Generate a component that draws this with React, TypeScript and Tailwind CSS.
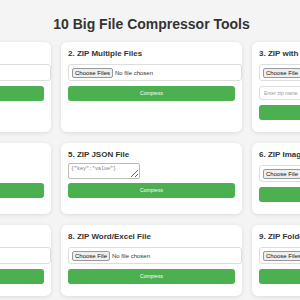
import React from 'react';

type Tool = {
  title: string;
  kind: 'file' | 'files' | 'text' | 'named';
  placeholder?: string;
};

const tools: Tool[] = [
  { title: '1. ZIP Single File', kind: 'file' },
  { title: '2. ZIP Multiple Files', kind: 'files' },
  { title: '3. ZIP with Custom Name', kind: 'named' },
  { title: '4. ZIP Text File', kind: 'text', placeholder: 'Enter text here...' },
  { title: '5. ZIP JSON File', kind: 'text', placeholder: '{"key":"value"}' },
  { title: '6. ZIP Images', kind: 'file' },
  { title: '7. ZIP PDF File', kind: 'file' },
  { title: '8. ZIP Word/Excel File', kind: 'file' },
  { title: '9. ZIP Folder', kind: 'files' },
  { title: '10. ZIP Any Big File', kind: 'file' },
];

function FileInput({ multiple }: { multiple?: boolean }) {
  return (
    <input
      type="file"
      multiple={multiple}
      className="block w-[174px] h-[17px] p-[3px] border border-[#ddd] rounded-[3px] bg-white text-[6px] leading-[8px] text-[#333] file:text-[6px] file:leading-[8px] file:px-[2px] file:py-0 file:mr-[2px] file:border file:border-[#999] file:rounded-[2px] file:bg-[#efefef] file:text-[#111]"
    />
  );
}

function ToolCard({ tool }: { tool: Tool }) {
  return (
    <div className="bg-white rounded-[6px] shadow-[0_1px_4px_rgba(0,0,0,0.1)] px-[7px] pt-[7px] pb-[12px]">
      <h3 className="text-[8px] leading-[9px] font-bold text-[#333] mb-[6px] whitespace-nowrap">
        {tool.title}
      </h3>

      {tool.kind === 'text' ? (
        <textarea
          placeholder={tool.placeholder}
          className="block -mt-[2px] w-[72px] h-[16px] p-[2px] border border-[#bbb] rounded-[2px] text-[5px] leading-[6px] font-['Liberation_Mono',monospace] placeholder:text-[#777]"
        />
      ) : (
        <FileInput multiple={tool.kind === 'files'} />
      )}

      {tool.kind === 'named' && (
        <input
          type="text"
          placeholder="Enter zip name"
          className="block mt-[5px] w-[174px] h-[14px] px-[4px] border border-[#ddd] rounded-[3px] text-[5px] placeholder:text-[#999]"
        />
      )}

      <button
        className={`block w-full h-[15px] bg-[#4caf50] text-white text-[5px] rounded-[3px] ${
          tool.kind === 'text' ? 'mt-[4px]' : 'mt-[5px]'
        }`}
      >
        Compress
      </button>
    </div>
  );
}

export default function App() {
  return (
    <div className="min-h-screen w-[300px] overflow-hidden bg-[#f4f4f4] font-['Liberation_Sans',Arial,sans-serif] pt-[16px] pl-[3px]">
      <h1 className="text-center text-[14px] leading-[16px] font-bold text-[#333] mb-[10px]">
        10 Big File Compressor Tools
      </h1>
      <div className="flex justify-center">
        <div className="grid grid-cols-[181px_181px_181px] gap-x-[10px] gap-y-[11px] shrink-0">
          {tools.map((t) => (
            <ToolCard key={t.title} tool={t} />
          ))}
        </div>
      </div>
    </div>
  );
}
